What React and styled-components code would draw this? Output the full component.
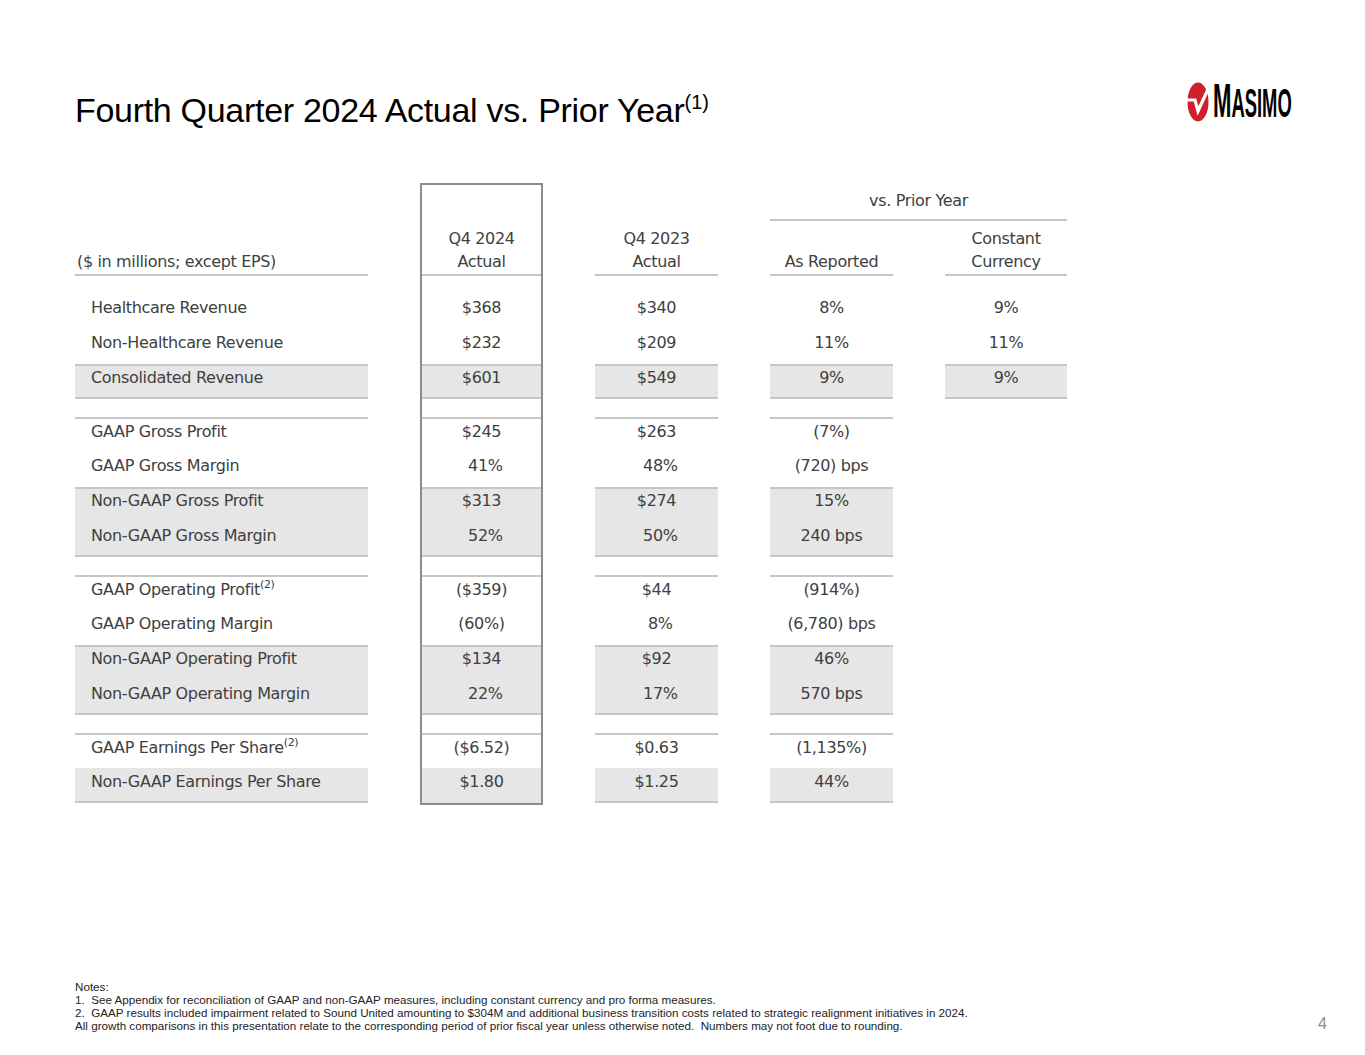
import React from 'react';
import styled, { createGlobalStyle } from 'styled-components';

const GlobalStyle = createGlobalStyle`
  html, body { margin: 0; padding: 0; background: #ffffff; }
  * { box-sizing: border-box; }
`;

const Page = styled.div`
  width: 1365px;
  height: 1055px;
  display: flex;
  flex-direction: column;
  background: #ffffff;
  color: #404040;
`;

const Header = styled.header`
  display: flex;
  justify-content: space-between;
  align-items: flex-start;
  padding: 82px 72px 0 75px;
  height: 183px;
`;

const Title = styled.h1`
  margin: 9px 0 0;
  font-family: 'Liberation Sans', Arial, sans-serif;
  font-weight: normal;
  font-size: 34px;
  line-height: 38px;
  letter-spacing: -0.3px;
  color: #000000;
  sup {
    font-size: 20px;
    vertical-align: 13px;
    line-height: 0;
    letter-spacing: 0;
  }
`;

const Logo = styled.div`
  display: flex;
  align-items: flex-start;
  gap: 4px;
  height: 44px;
`;

const Wordmark = styled.div`
  width: 80px;
  height: 40px;
  margin-top: -5px;
`;

const WordmarkText = styled.span`
  display: inline-block;
  font-family: 'Liberation Sans', Arial, sans-serif;
  font-weight: bold;
  color: #000000;
  white-space: nowrap;
  transform: scaleX(0.46);
  transform-origin: left top;
  line-height: 48px;
`;

const Letters = styled.span`
  font-size: ${p => p.$size}px;
`;

const Table = styled.div`
  display: flex;
  align-items: flex-start;
  padding-left: 75px;
  column-gap: 52px;
  font-family: 'DejaVu Sans', Verdana, sans-serif;
  font-size: 16px;
  letter-spacing: -0.35px;
  color: #404040;
`;

const Column = styled.div`
  width: ${p => p.$w}px;
  display: flex;
  flex-direction: column;
  ${p => p.$boxed && `
    border: 2px solid #8c8c8c;
  `}
`;

const HeadCell = styled.div`
  height: ${p => p.$h}px;
  display: flex;
  flex-direction: column;
  justify-content: flex-end;
  align-items: ${p => (p.$left ? 'flex-start' : 'center')};
  padding: 0 0 1px ${p => (p.$left ? '2px' : '0')};
  line-height: 23px;
  border-bottom: 2px solid #c6c6c6;
  text-align: center;
`;

const Spacer = styled.div`
  height: 18px;
`;

const Block = styled.div`
  display: flex;
  flex-direction: column;
  border-top: ${p => (p.$top ? '2px solid #c6c6c6' : 'none')};
  border-bottom: ${p => (p.$bottom ? '2px solid #c6c6c6' : 'none')};
`;

const Cell = styled.div`
  height: ${p => p.$h}px;
  padding-top: ${p => p.$pt}px;
  padding-left: ${p => (p.$label ? '16px' : '0')};
  line-height: 20px;
  text-align: ${p => (p.$label ? 'left' : 'center')};
  white-space: pre;
  background: ${p => (p.$shade ? '#e6e6e6' : 'transparent')};
  border-top: ${p => (p.$divider ? '2px solid #c6c6c6' : 'none')};
  sup {
    font-size: 11px;
    vertical-align: 7px;
    line-height: 0;
  }
`;

const Group = styled.div`
  display: flex;
  flex-direction: column;
`;

const GroupTitle = styled.div`
  height: 38px;
  display: flex;
  align-items: flex-end;
  justify-content: center;
  padding-bottom: 7px;
  line-height: 23px;
  border-bottom: 2px solid #c6c6c6;
`;

const GroupCols = styled.div`
  display: flex;
  column-gap: 52px;
`;

const Footer = styled.footer`
  margin-top: auto;
  display: flex;
  justify-content: space-between;
  align-items: flex-end;
  padding: 0 38px 23px 75px;
`;

const Notes = styled.div`
  font-family: 'Liberation Sans', Arial, sans-serif;
  font-size: 11.65px;
  line-height: 13px;
  color: #222222;
  p { margin: 0; white-space: pre; }
`;

const PageNum = styled.div`
  font-family: 'Liberation Sans', Arial, sans-serif;
  font-size: 16px;
  line-height: 16px;
  color: #8c8c8c;
`;

const E = '\u2002';

const groups = [
  [
    { label: 'Healthcare Revenue', v: ['$368', '$340', '8%', '9%'] },
    { label: 'Non-Healthcare Revenue', v: ['$232', '$209', '11%', '11%'] },
    { label: 'Consolidated Revenue', shade: true, divider: true, v: ['$601', '$549', '9%', '9%'] },
  ],
  [
    { label: 'GAAP Gross Profit', v: ['$245', '$263', '(7%)'] },
    { label: 'GAAP Gross Margin', v: [E + '41%', E + '48%', '(720) bps'] },
    { label: 'Non-GAAP Gross Profit', shade: true, divider: true, v: ['$313', '$274', '15%'] },
    { label: 'Non-GAAP Gross Margin', shade: true, v: [E + '52%', E + '50%', '240 bps'] },
  ],
  [
    { label: 'GAAP Operating Profit', sup: '(2)', v: ['($359)', '$44', '(914%)'] },
    { label: 'GAAP Operating Margin', v: ['(60%)', E + '8%', '(6,780) bps'] },
    { label: 'Non-GAAP Operating Profit', shade: true, divider: true, v: ['$134', '$92', '46%'] },
    { label: 'Non-GAAP Operating Margin', shade: true, v: [E + '22%', E + '17%', '570 bps'] },
  ],
  [
    { label: 'GAAP Earnings Per Share', sup: '(2)', v: ['($6.52)', '$0.63', '(1,135%)'] },
    { label: 'Non-GAAP Earnings Per Share', shade: true, v: ['$1.80', '$1.25', '44%'] },
  ],
];

// one column of the table: header cell, then each group of rows
const DataColumn = ({ idx, width, headH, head, boxed }) => {
  const isLabel = idx < 0;
  return (
    <Column $w={width} $boxed={boxed}>
      <HeadCell $h={headH} $left={isLabel}>
        {head}
      </HeadCell>
      {groups.map((rows, gi) => {
        if (!isLabel && rows[0].v[idx] === undefined) return null;
        const last = gi === groups.length - 1;
        return (
          <React.Fragment key={gi}>
            <Spacer />
            <Block $top={gi > 0} $bottom={!(boxed && last)}>
              {rows.map((r, ri) => {
                const first = ri === 0 && gi > 0;
                const h = 35 - (first ? 2 : 0) - (ri === rows.length - 1 && !(boxed && last) ? 2 : 0);
                return (
                  <Cell
                    key={ri}
                    $h={h}
                    $pt={first ? 3 : r.divider ? 2 : 4}
                    $label={isLabel}
                    $shade={r.shade}
                    $divider={r.divider}
                  >
                    {isLabel ? r.label : r.v[idx]}
                    {isLabel && r.sup && <sup>{r.sup}</sup>}
                  </Cell>
                );
              })}
            </Block>
          </React.Fragment>
        );
      })}
    </Column>
  );
};

const MasimoMark = () => (
  <svg width="22" height="40" viewBox="0 0 22 40">
    <ellipse cx="11" cy="20" rx="10.5" ry="19.5" fill="#d0202e" />
    <polyline points="-1,18 8,18 11,29 23,3" fill="none" stroke="#ffffff" strokeWidth="3.2" strokeLinejoin="miter" />
  </svg>
);

const App = () => (
  <Page>
    <GlobalStyle />
    <Header>
      <Title>
        Fourth Quarter 2024 Actual vs. Prior Year<sup>(1)</sup>
      </Title>
      <Logo>
        <MasimoMark />
        <Wordmark>
          <WordmarkText>
            <Letters $size={48}>M</Letters>
            <Letters $size={40}>ASIMO</Letters>
          </WordmarkText>
        </Wordmark>
      </Logo>
    </Header>

    <Table>
      <DataColumn idx={-1} width={293} headH={93} head="($ in millions; except EPS)" />
      <DataColumn
        idx={0}
        width={123}
        headH={91}
        boxed
        head={<><span>Q4 2024</span><span>Actual</span></>}
      />
      <DataColumn idx={1} width={123} headH={93} head={<><span>Q4 2023</span><span>Actual</span></>} />
      <Group>
        <GroupTitle>vs. Prior Year</GroupTitle>
        <GroupCols>
          <DataColumn idx={2} width={123} headH={55} head="As Reported" />
          <DataColumn idx={3} width={122} headH={55} head={<><span>Constant</span><span>Currency</span></>} />
        </GroupCols>
      </Group>
    </Table>

    <Footer>
      <Notes>
        <p>Notes:</p>
        <p>1.  See Appendix for reconciliation of GAAP and non-GAAP measures, including constant currency and pro forma measures.</p>
        <p>2.  GAAP results included impairment related to Sound United amounting to $304M and additional business transition costs related to strategic realignment initiatives in 2024.</p>
        <p>All growth comparisons in this presentation relate to the corresponding period of prior fiscal year unless otherwise noted.  Numbers may not foot due to rounding.</p>
      </Notes>
      <PageNum>4</PageNum>
    </Footer>
  </Page>
);

export default App;
